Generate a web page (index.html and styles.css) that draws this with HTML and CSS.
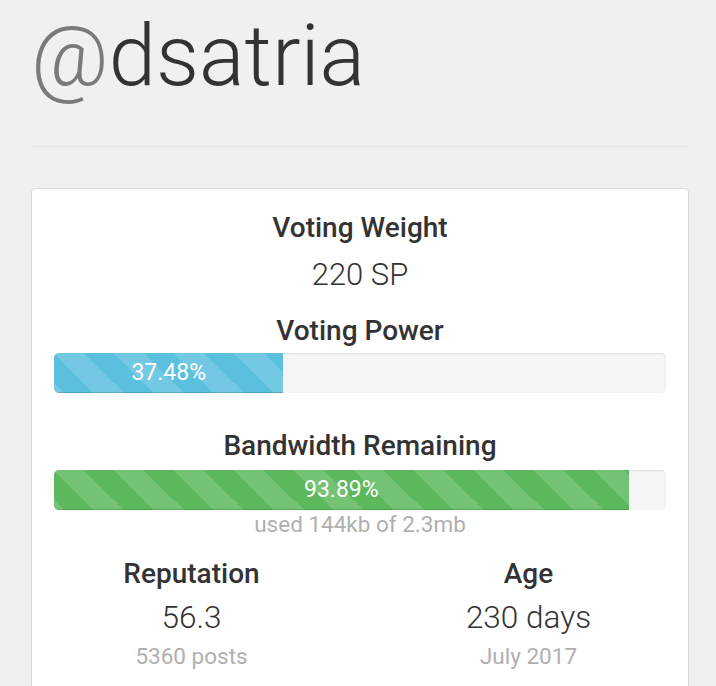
FILE: index.html
```html
<!DOCTYPE html>
<html>
<head>
<meta charset="utf-8">
<link rel="stylesheet" href="styles.css">
</head>
<body>
<div class="page">
  <h1 class="username"><span class="at">@</span>dsatria</h1>
  <hr class="divider">
  <div class="card">
    <div class="label">Voting Weight</div>
    <div class="value vw-value">220 SP</div>
    <div class="label vp-label">Voting Power</div>
    <div class="progress">
      <div class="bar bar-info" style="width:37.48%">37.48%</div>
    </div>
    <div class="label bw-label">Bandwidth Remaining</div>
    <div class="progress bw-progress">
      <div class="bar bar-success" style="width:93.89%">93.89%</div>
    </div>
    <div class="sub">used 144kb of 2.3mb</div>
    <div class="stats">
      <div class="stat">
        <div class="label">Reputation</div>
        <div class="value stat-value">56.3</div>
        <div class="sub stat-sub">5360 posts</div>
      </div>
      <div class="stat">
        <div class="label">Age</div>
        <div class="value stat-value">230 days</div>
        <div class="sub stat-sub">July 2017</div>
      </div>
    </div>
  </div>
</div>
</body>
</html>
```

FILE: styles.css
```css
html, body {
  margin: 0;
  padding: 0;
  background: #f0f0f0;
}
body {
  font-family: Roboto, "Liberation Sans", sans-serif;
  color: #333;
}
.page {
  padding: 0 27px 0 31px;
}
.username {
  margin: 14px 0 0 0;
  font-size: 85px;
  line-height: 85px;
  font-weight: 300;
  color: #333;
  letter-spacing: 0;
}
.at {
  color: #7a7a7a;
}
.divider {
  border: 0;
  border-top: 1px solid #e4e4e4;
  margin: 47px 0 0 0;
  height: 0;
}
.card {
  margin-top: 41px;
  background: #fff;
  border: 1px solid #dcdcdc;
  border-radius: 4px;
  padding: 22px 22px 40px 22px;
  text-align: center;
  box-shadow: 0 1px 1px rgba(0,0,0,.05);
}
.label {
  font-size: 28px;
  line-height: 34px;
  font-weight: 500;
  color: #333;
}
.value {
  font-size: 31px;
  line-height: 36px;
  font-weight: 300;
  color: #333;
}
.vw-value {
  margin-top: 12px;
}
.vp-label {
  margin-top: 21px;
}
.progress {
  margin-top: 5px;
  height: 40px;
  background: #f5f5f5;
  border-radius: 5px;
  overflow: hidden;
  box-shadow: inset 0 1px 2px rgba(0,0,0,.1);
  display: flex;
}
.bw-progress {
  margin-top: 7px;
}
.bar {
  height: 100%;
  font-size: 23px;
  line-height: 40px;
  color: #fff;
  text-align: center;
  box-shadow: inset 0 -1px 0 rgba(0,0,0,.15);
  background-image: linear-gradient(45deg, rgba(255,255,255,.15) 25%, transparent 25%, transparent 50%, rgba(255,255,255,.15) 50%, rgba(255,255,255,.15) 75%, transparent 75%, transparent);
  background-size: 60px 60px;
}
.bar-info {
  background-color: #5bc0de;
}
.bar-success {
  background-color: #5cb85c;
}
.bw-label {
  margin-top: 36px;
}
.sub {
  font-size: 22.5px;
  line-height: 26px;
  color: #b0b0b0;
  margin-top: 1px;
}
.stats {
  display: grid;
  grid-template-columns: 1fr 1fr;
  margin: 20px -31px 0 -31px;
}
.stat-value {
  margin-top: 9px;
  font-size: 31.5px;
}
.stat-sub {
  margin-top: 7px;
}
```
